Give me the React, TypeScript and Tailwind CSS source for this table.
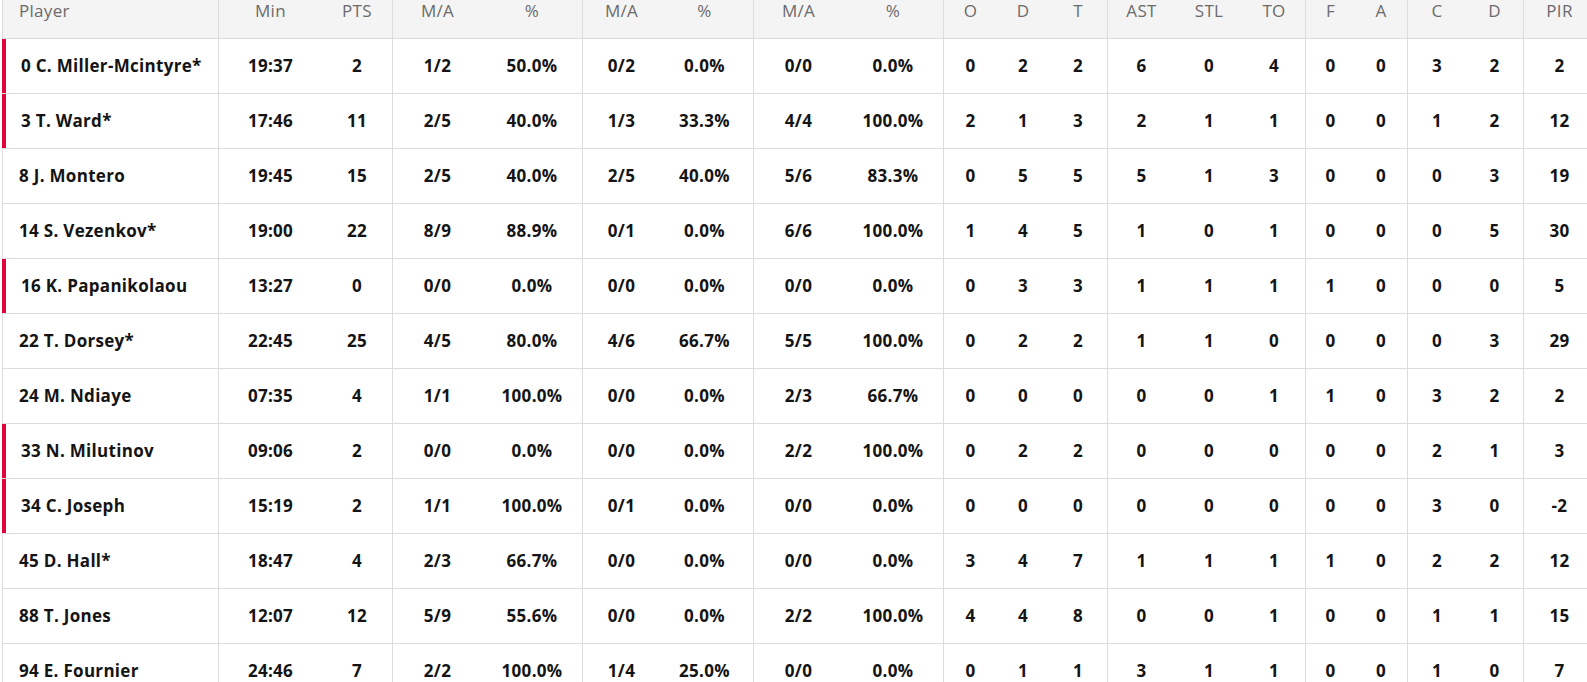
import React from "react";

interface Col {
  label: string;
  cls: string;
  group?: boolean;
}

// widths tuned so each value sits under its header
const cols: Col[] = [
  { label: "Min", cls: "w-[104px]", group: true },
  { label: "PTS", cls: "w-[70px]" },
  { label: "M/A", cls: "w-[90px]", group: true },
  { label: "%", cls: "w-[100px]" },
  { label: "M/A", cls: "w-[78px]", group: true },
  { label: "%", cls: "w-[93px] pr-[4px]" },
  { label: "M/A", cls: "w-[90px]", group: true },
  { label: "%", cls: "w-[100px]" },
  { label: "O", cls: "w-[54px]", group: true },
  { label: "D", cls: "w-[52px]" },
  { label: "T", cls: "w-[58px]" },
  { label: "AST", cls: "w-[68px]", group: true },
  { label: "STL", cls: "w-[68px]" },
  { label: "TO", cls: "w-[62px]" },
  { label: "F", cls: "w-[50px]", group: true },
  { label: "A", cls: "w-[52px]" },
  { label: "C", cls: "w-[59px]", group: true },
  { label: "D", cls: "w-[57px]" },
  { label: "PIR", cls: "w-[72px]", group: true },
];

const rows: { name: string; onCourt: boolean; stats: string[] }[] = [
  { name: "0 C. Miller-Mcintyre*", onCourt: true, stats: ["19:37", "2", "1/2", "50.0%", "0/2", "0.0%", "0/0", "0.0%", "0", "2", "2", "6", "0", "4", "0", "0", "3", "2", "2"] },
  { name: "3 T. Ward*", onCourt: true, stats: ["17:46", "11", "2/5", "40.0%", "1/3", "33.3%", "4/4", "100.0%", "2", "1", "3", "2", "1", "1", "0", "0", "1", "2", "12"] },
  { name: "8 J. Montero", onCourt: false, stats: ["19:45", "15", "2/5", "40.0%", "2/5", "40.0%", "5/6", "83.3%", "0", "5", "5", "5", "1", "3", "0", "0", "0", "3", "19"] },
  { name: "14 S. Vezenkov*", onCourt: false, stats: ["19:00", "22", "8/9", "88.9%", "0/1", "0.0%", "6/6", "100.0%", "1", "4", "5", "1", "0", "1", "0", "0", "0", "5", "30"] },
  { name: "16 K. Papanikolaou", onCourt: true, stats: ["13:27", "0", "0/0", "0.0%", "0/0", "0.0%", "0/0", "0.0%", "0", "3", "3", "1", "1", "1", "1", "0", "0", "0", "5"] },
  { name: "22 T. Dorsey*", onCourt: false, stats: ["22:45", "25", "4/5", "80.0%", "4/6", "66.7%", "5/5", "100.0%", "0", "2", "2", "1", "1", "0", "0", "0", "0", "3", "29"] },
  { name: "24 M. Ndiaye", onCourt: false, stats: ["07:35", "4", "1/1", "100.0%", "0/0", "0.0%", "2/3", "66.7%", "0", "0", "0", "0", "0", "1", "1", "0", "3", "2", "2"] },
  { name: "33 N. Milutinov", onCourt: true, stats: ["09:06", "2", "0/0", "0.0%", "0/0", "0.0%", "2/2", "100.0%", "0", "2", "2", "0", "0", "0", "0", "0", "2", "1", "3"] },
  { name: "34 C. Joseph", onCourt: true, stats: ["15:19", "2", "1/1", "100.0%", "0/1", "0.0%", "0/0", "0.0%", "0", "0", "0", "0", "0", "0", "0", "0", "3", "0", "-2"] },
  { name: "45 D. Hall*", onCourt: false, stats: ["18:47", "4", "2/3", "66.7%", "0/0", "0.0%", "0/0", "0.0%", "3", "4", "7", "1", "1", "1", "1", "0", "2", "2", "12"] },
  { name: "88 T. Jones", onCourt: false, stats: ["12:07", "12", "5/9", "55.6%", "0/0", "0.0%", "2/2", "100.0%", "4", "4", "8", "0", "0", "1", "0", "0", "1", "1", "15"] },
  { name: "94 E. Fournier", onCourt: false, stats: ["24:46", "7", "2/2", "100.0%", "1/4", "25.0%", "0/0", "0.0%", "0", "1", "1", "3", "1", "1", "0", "0", "1", "0", "7"] },
];

const BoxScore = () => {
  return (
    <div className="w-[1587px] h-[682px] overflow-hidden bg-white font-['Open_Sans',sans-serif] tracking-[0.3px]">
      <div className="ml-[2px] w-[1600px]">
        {/* header */}
        <div className="flex h-[39px] bg-[#f4f4f4] border-b border-[#dcdcdc] text-[17px] leading-[22px] text-[#6b6b6b]">
          <div className="w-[216px] shrink-0 border-l border-[#dcdcdc] pl-[16px]">Player</div>
          {cols.map((c, i) => (
            <div
              key={i}
              className={`${c.cls} shrink-0 text-center ${c.group ? "border-l border-[#dcdcdc]" : ""}`}
            >
              {c.label}
            </div>
          ))}
        </div>

        {/* players */}
        {rows.map((r, idx) => (
          <div key={idx} className="flex h-[55px] border-b border-[#dcdcdc] text-[17px] font-bold text-[#141414]">
            <div
              className={`w-[216px] shrink-0 flex items-center whitespace-nowrap ${
                r.onCourt ? "border-l-4 border-[#e0063b] pl-[15px]" : "border-l border-[#dcdcdc] pl-[16px]"
              }`}
            >
              {r.name}
            </div>
            {cols.map((c, i) => (
              <div
                key={i}
                className={`${c.cls} shrink-0 flex items-center justify-center ${c.group ? "border-l border-[#dcdcdc]" : ""}`}
              >
                {r.stats[i]}
              </div>
            ))}
          </div>
        ))}
      </div>
    </div>
  );
};

export default function App() {
  return <BoxScore />;
}
